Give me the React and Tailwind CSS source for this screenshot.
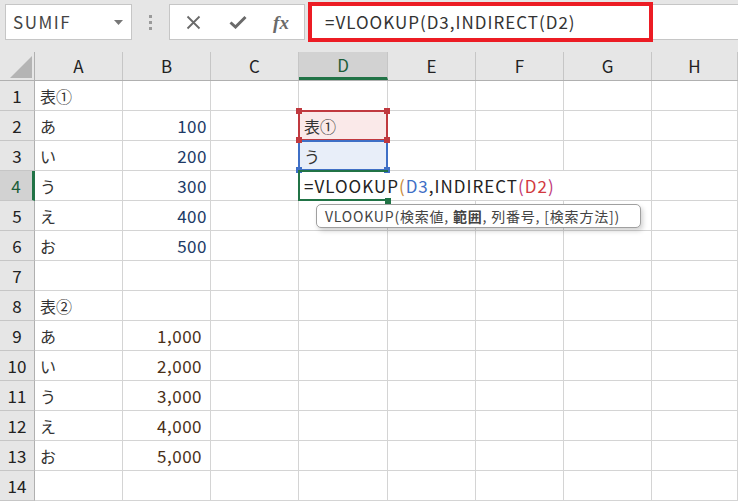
import React from 'react';

const FONT = { fontFamily: '"Noto Sans CJK JP", "Noto Sans", sans-serif' };

const widths = ['w-[88px]', 'w-[88px]', 'w-[88px]', 'w-[89px]', 'w-[88px]', 'w-[88px]', 'w-[88px]', 'flex-1'];
const letters = ['A', 'B', 'C', 'D', 'E', 'F', 'G', 'H'];

const rows = [
  ['表①', ''],
  ['あ', '100'],
  ['い', '200'],
  ['う', '300'],
  ['え', '400'],
  ['お', '500'],
  ['', ''],
  ['表②', ''],
  ['あ', '1,000'],
  ['い', '2,000'],
  ['う', '3,000'],
  ['え', '4,000'],
  ['お', '5,000'],
  ['', ''],
];

const Corner = ({ className }) => <span className={`absolute w-[6px] h-[6px] ${className}`} />;

const CellD = ({ row }) => {
  if (row === 2) {
    return (
      <div className="relative h-full bg-[#fae9e9] flex items-center pl-[5px] text-[16px] text-[#333]">
        表①
        <div className="absolute inset-[-1px] border-2 border-[#c0393f]" />
        <Corner className="bg-[#c0393f] -left-[3px] -top-[3px]" />
        <Corner className="bg-[#c0393f] -right-[3px] -top-[3px]" />
        <Corner className="bg-[#c0393f] -left-[3px] -bottom-[3px] z-10" />
        <Corner className="bg-[#c0393f] -right-[3px] -bottom-[3px] z-10" />
      </div>
    );
  }
  if (row === 3) {
    return (
      <div className="relative h-full bg-[#e8eef9] flex items-center pl-[5px] text-[16px] text-[#333]">
        う
        <div className="absolute inset-[-1px] border-2 border-[#3f6fc6]" />
        <Corner className="bg-[#3f6fc6] -left-[3px] -bottom-[3px] z-10" />
        <Corner className="bg-[#3f6fc6] -right-[3px] -bottom-[3px] z-10" />
      </div>
    );
  }
  if (row === 4) {
    return (
      <div className="relative h-full flex items-center pl-[5px] text-[17px] tracking-[1px] text-[#222] whitespace-nowrap z-20">
        <div className="absolute left-[-1px] top-[-1px] bottom-[-1px] right-0 border-l-2 border-t-2 border-b-2 border-[#217346]" />
        <span className="relative">
          =VLOOKUP<span className="text-[#c98a3a]">(</span>
          <span className="text-[#3f6fc6]">D3</span>,INDIRECT<span className="text-[#c0397a]">(</span>
          <span className="text-[#d2393f]">D2</span>
          <span className="text-[#c0397a]">)</span>
        </span>
        <span className="absolute w-[6px] h-[6px] bg-[#217346] -right-[3px] -bottom-[4px]" />
      </div>
    );
  }
  return null;
};

export default function App() {
  return (
    <div className="w-[738px] h-[504px] overflow-hidden bg-white relative" style={FONT}>
      {/* Toolbar */}
      <div className="h-[52px] bg-[#e6e6e6]">
        <div className="h-[44px] flex items-center">
          <div className="ml-[5px] w-[127px] h-[36px] bg-white border border-[#c6c6c6] flex items-center justify-between pl-[7px] pr-[8px]">
            <span className="text-[17px] text-[#444] tracking-[1.5px]">SUMIF</span>
            <svg width="9" height="5" viewBox="0 0 9 5"><path d="M0 0h9L4.5 5z" fill="#777" /></svg>
          </div>
          <div className="w-[37px] flex flex-col items-center gap-[3px]">
            <span className="w-[3px] h-[3px] bg-[#9a9a9a]" />
            <span className="w-[3px] h-[3px] bg-[#9a9a9a]" />
            <span className="w-[3px] h-[3px] bg-[#9a9a9a]" />
          </div>
          <div className="w-[136px] h-[36px] bg-white border border-[#c6c6c6] flex items-center">
            <div className="w-[46px] flex justify-center">
              <svg width="15" height="15" viewBox="0 0 15 15"><path d="M1.5 1.5l12 12M13.5 1.5l-12 12" stroke="#6a6a6a" strokeWidth="1.8" /></svg>
            </div>
            <div className="w-[44px] flex justify-center">
              <svg width="18" height="14" viewBox="0 0 18 14"><path d="M1.5 7.5l5 4.5L16.5 2" stroke="#6a6a6a" strokeWidth="3" fill="none" /></svg>
            </div>
            <div className="flex-1 flex justify-center pr-[2px]">
              <span className="text-[19px] italic font-bold text-[#6a6a6a] leading-none" style={{ fontFamily: '"Liberation Serif", serif' }}>
                fx
              </span>
            </div>
          </div>
          <div className="ml-[3px] w-[345px] h-[40px] border-[4px] border-[#ec1c24] bg-white flex items-center pl-[13px]">
            <span className="text-[17px] tracking-[1px] text-[#333]">=VLOOKUP(D3,INDIRECT(D2)</span>
          </div>
          <div className="flex-1 h-[36px] bg-white border-y border-[#c6c6c6]" />
        </div>
      </div>

      {/* Column headers */}
      <div className="flex h-[29px] bg-[#e6e6e6] border-b border-[#b0b0b0]">
        <div className="w-[35px] relative border-r border-[#b0b0b0]">
          <svg className="absolute right-[2px] bottom-[2px]" width="22" height="22" viewBox="0 0 22 22"><path d="M22 0V22H0z" fill="#b4b4b4" /></svg>
        </div>
        {letters.map((l, i) => (
          <div
            key={l}
            className={`${widths[i]} h-full flex items-center justify-center text-[17px] border-r border-[#c6c6c6] ${
              l === 'D' ? 'bg-[#d2d2d2] text-[#1d5e3a] border-b-[3px] border-b-[#217346] -mb-px' : 'text-[#222]'
            }`}
          >
            {l}
          </div>
        ))}
      </div>

      {/* Rows */}
      {rows.map(([a, b], idx) => {
        const r = idx + 1;
        const numCls = r < 8 ? 'text-[#203a66] pr-[3px]' : 'text-[#4a3018] pr-[8px]';
        return (
          <div key={r} className="flex h-[30px]">
            <div
              className={`w-[35px] h-full flex items-center justify-center text-[17px] border-b border-[#c6c6c6] ${
                r === 4 ? 'bg-[#d2d2d2] text-[#1d5e3a] border-r-[3px] border-r-[#217346]' : 'bg-[#e6e6e6] text-[#222] border-r border-r-[#b0b0b0]'
              }`}
            >
              {r}
            </div>
            {letters.map((l, i) => {
              const noRight = r === 4 && (l === 'D' || l === 'E' || l === 'F');
              return (
                <div
                  key={l}
                  className={`${widths[i]} h-full border-b border-[#d4d4d4] ${noRight ? '' : 'border-r'} ${
                    l === 'D' ? 'relative' : ''
                  }`}
                >
                  {l === 'A' && a && (
                    <div className="h-full flex items-center pl-[5px] text-[16px] text-[#333]">{a}</div>
                  )}
                  {l === 'B' && b && (
                    <div className={`h-full flex items-center justify-end text-[17px] tracking-[0.5px] ${numCls}`}>{b}</div>
                  )}
                  {l === 'D' && <CellD row={r} />}
                </div>
              );
            })}
          </div>
        );
      })}

      {/* Tooltip */}
      <div className="absolute left-[316px] top-[204px] w-[325px] h-[24px] px-[8px] flex items-center bg-white border border-[#a0a0a0] rounded-[5px] shadow-[2px_3px_5px_rgba(0,0,0,0.18)] text-[14px] tracking-[0.8px] text-[#444] whitespace-nowrap z-30">
        VLOOKUP(検索値,&nbsp;<span className="font-bold">範囲</span>,&nbsp;列番号,&nbsp;[検索方法])
      </div>
    </div>
  );
}
